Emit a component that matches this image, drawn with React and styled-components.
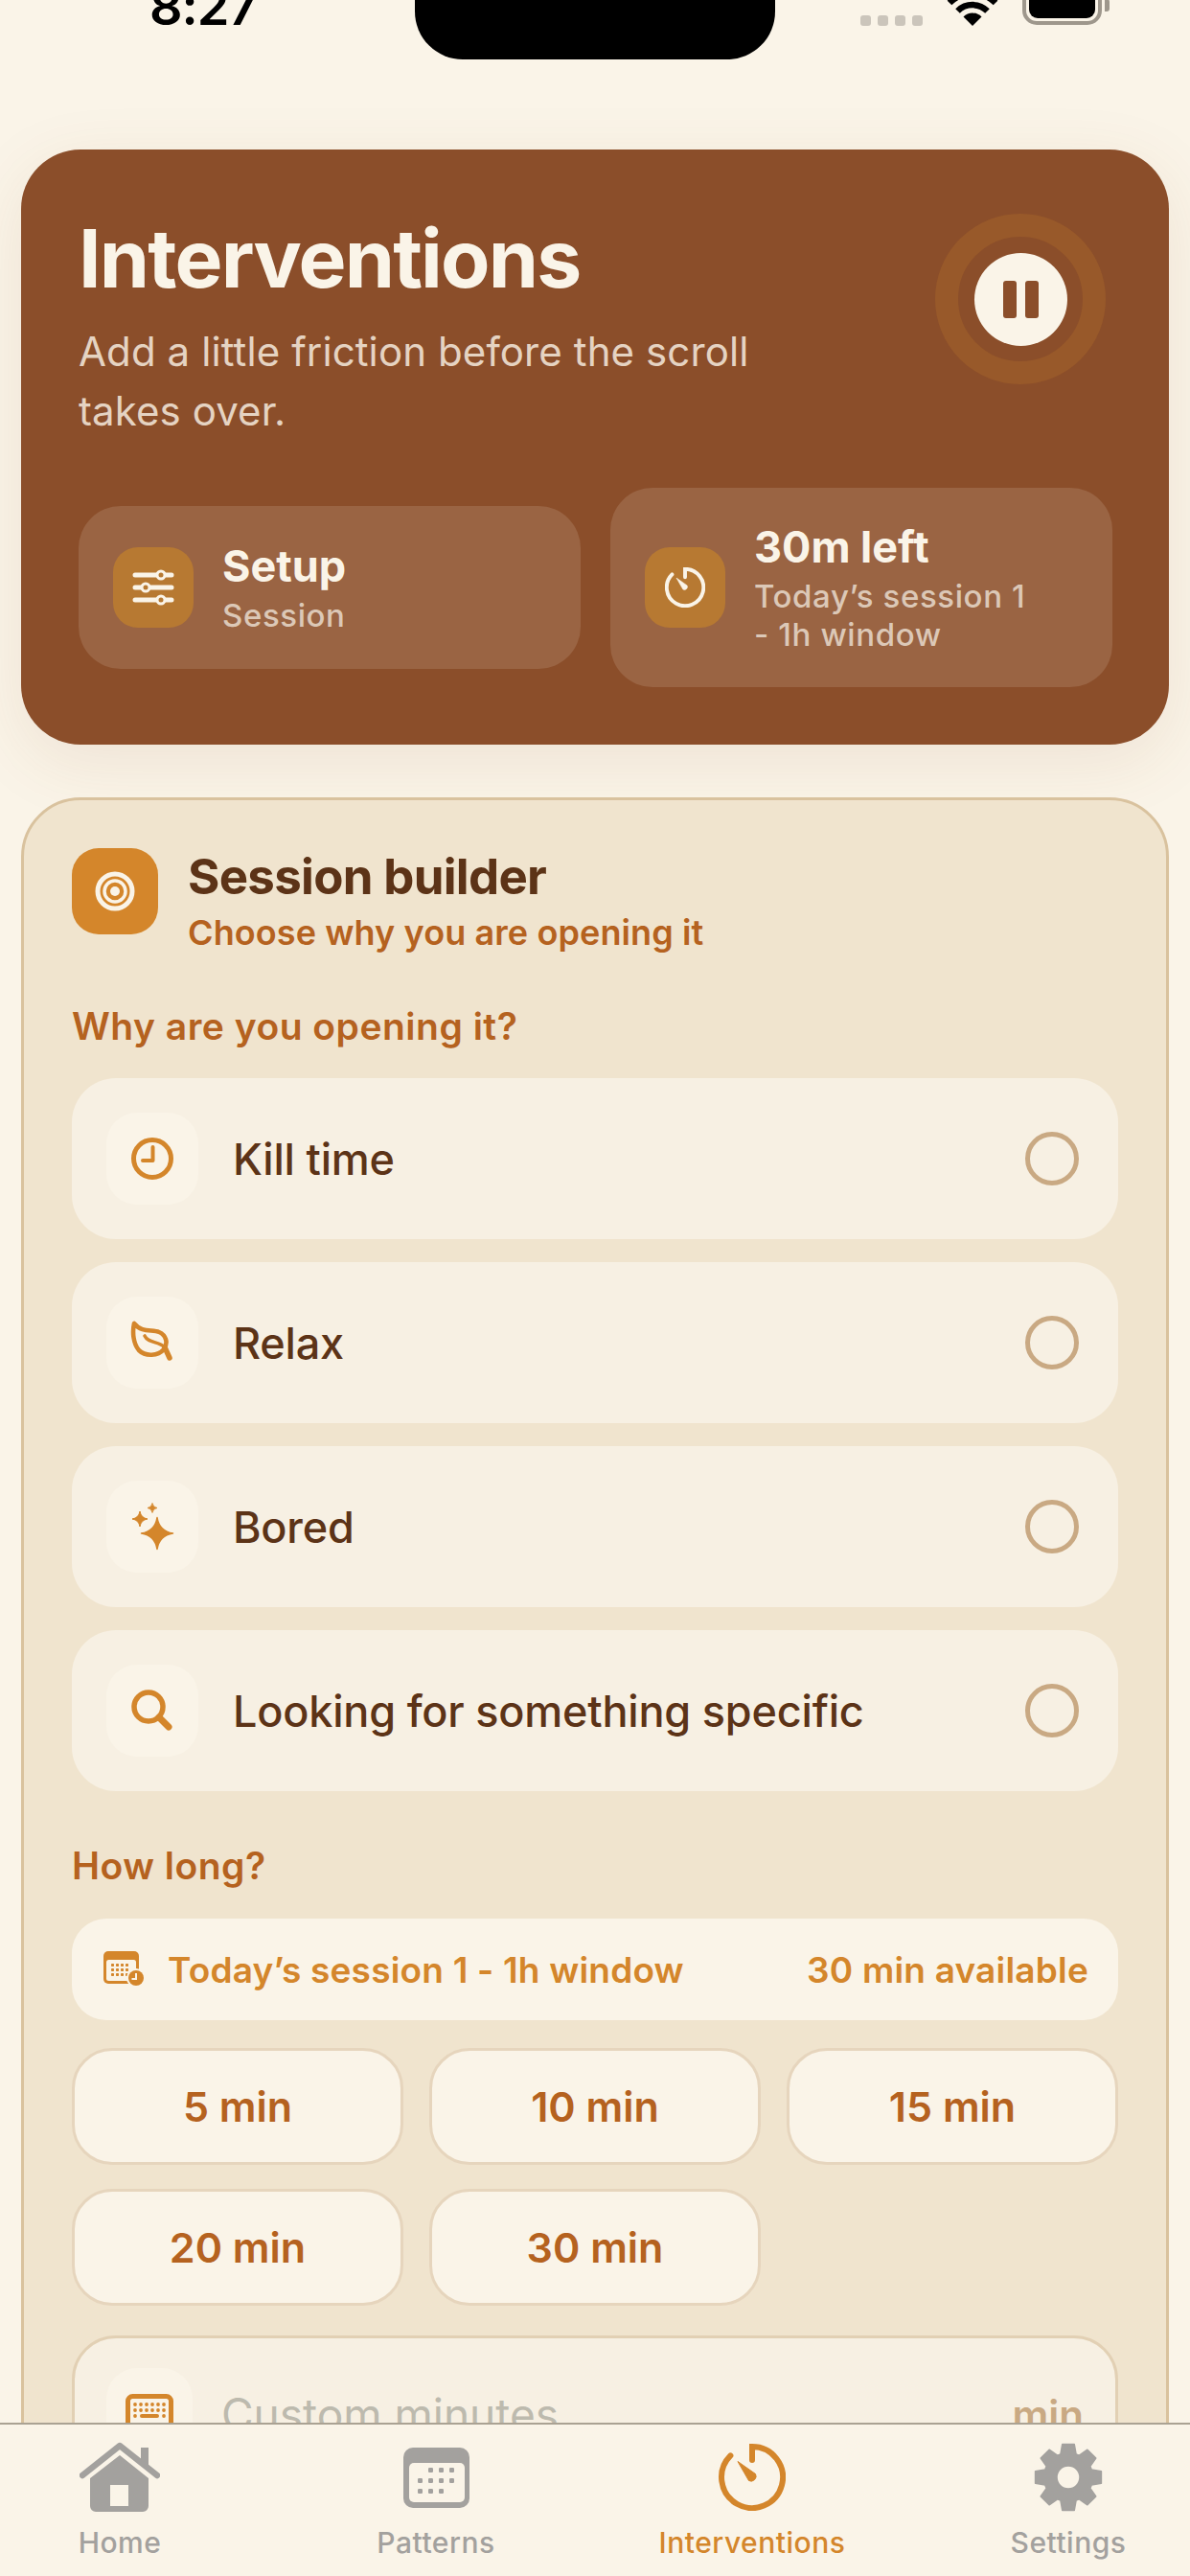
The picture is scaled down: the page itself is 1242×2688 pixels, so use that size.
import React from "react";
import styled, { createGlobalStyle } from "styled-components";

const ORANGE = "#D4862B";
const GREY = "#A3A19E";
const CREAM = "#FAF4E8";

const Global = createGlobalStyle`
  html, body { margin: 0; padding: 0; background: ${CREAM}; overflow: hidden; }
  * { box-sizing: border-box; }
  body { font-family: Inter, "Noto Sans", sans-serif; }
`;

const Screen = styled.div`
  position: relative;
  width: 1242px;
  height: 2688px;
  overflow: hidden;
  background: ${CREAM};
`;
const StatusBar = styled.div`
  display: flex;
  justify-content: space-between;
  align-items: flex-end;
  height: 27px;
  padding: 0 83px 0 156px;
`;
const Time = styled.div`
  font-size: 54px;
  line-height: 54px;
  font-weight: 600;
  color: #000;
  margin-bottom: -7px;
  letter-spacing: -1px;
`;
const Island = styled.div`
  position: absolute;
  top: 0;
  left: 433px;
  width: 376px;
  height: 62px;
  background: #000;
  border-radius: 0 0 50px 50px;
`;
const StatusRight = styled.div`
  display: flex;
  align-items: flex-end;
  gap: 22px;
`;
const Dots = styled.div`
  display: flex;
  gap: 7px;
`;
const Dot = styled.span`
  width: 11px;
  height: 11px;
  border-radius: 3px;
  background: #cbc5bb;
`;
const Content = styled.div`
  padding: 129px 22px 0;
`;
const Hero = styled.section`
  background: #8b4e2a;
  border-radius: 62px;
  padding: 60px 59px 60px 60px;
  box-shadow: 0 18px 70px rgba(139, 78, 42, 0.1);
`;
const HeroTop = styled.div`
  display: flex;
  justify-content: space-between;
  align-items: flex-start;
`;
const HeroText = styled.div`
  width: 760px;
  padding-top: 4px;
`;
const HeroTitle = styled.h1`
  margin: 0;
  font-size: 84px;
  line-height: 100px;
  font-weight: 700;
  letter-spacing: -1.8px;
  color: ${CREAM};
`;
const HeroSub = styled.p`
  margin: 16px 0 0;
  font-size: 42px;
  line-height: 62px;
  font-weight: 400;
  letter-spacing: 0.1px;
  color: #e5d3c2;
`;
const PauseRing = styled.div`
  width: 178px;
  height: 178px;
  margin: 7px 7px 0 0;
  border: 24px solid #98592a;
  border-radius: 50%;
  display: flex;
  align-items: center;
  justify-content: center;
  flex: none;
`;
const PauseBtn = styled.div`
  width: 97px;
  height: 97px;
  border-radius: 50%;
  background: ${CREAM};
  display: flex;
  align-items: center;
  justify-content: center;
  gap: 9px;
`;
const PauseBar = styled.span`
  width: 14px;
  height: 39px;
  border-radius: 3px;
  background: #8b4e2a;
`;
const Stats = styled.div`
  display: grid;
  grid-template-columns: 524px 524px;
  gap: 31px;
  align-items: center;
  margin-top: 49px;
`;
const Stat = styled.div`
  display: flex;
  align-items: center;
  gap: 30px;
  padding: 0 36px;
  height: ${(p) => p.$h}px;
  border-radius: 44px;
  background: #9a6443;
`;
const StatIcon = styled.div`
  width: 84px;
  height: 84px;
  border-radius: 26px;
  background: #b77932;
  display: flex;
  align-items: center;
  justify-content: center;
  flex: none;
`;
const StatText = styled.div`
  display: flex;
  flex-direction: column;
  max-width: 300px;
`;
const StatTitle = styled.div`
  font-size: 45px;
  line-height: 52px;
  font-weight: 700;
  color: ${CREAM};
`;
const StatSub = styled.div`
  margin-top: 5px;
  font-size: 33px;
  line-height: 40px;
  font-weight: 500;
  letter-spacing: 0.6px;
  color: #dcc8b7;
`;
const Builder = styled.section`
  margin-top: 55px;
  padding: 50px;
  background: #f0e4ce;
  border: 3px solid #d9c29e;
  border-radius: 62px;
  height: 1900px;
`;
const BuilderHead = styled.div`
  display: flex;
  align-items: flex-start;
  gap: 31px;
`;
const BuilderIcon = styled.div`
  width: 90px;
  height: 90px;
  border-radius: 28px;
  background: ${ORANGE};
  display: flex;
  align-items: center;
  justify-content: center;
  flex: none;
`;
const BuilderTitle = styled.h2`
  margin: 0;
  font-size: 51px;
  line-height: 60px;
  font-weight: 700;
  letter-spacing: -0.7px;
  color: #5c3317;
`;
const BuilderSub = styled.div`
  margin-top: 6px;
  font-size: 36px;
  line-height: 44px;
  font-weight: 600;
  letter-spacing: 0.1px;
  color: #b5621f;
`;
const Label = styled.div`
  margin-top: ${(p) => p.$mt}px;
  font-size: 39px;
  line-height: 46px;
  font-weight: 600;
  letter-spacing: 0.5px;
  color: #b5621f;
`;
const Options = styled.div`
  display: flex;
  flex-direction: column;
  gap: 24px;
  margin-top: 31px;
`;
const Option = styled.div`
  display: flex;
  align-items: center;
  height: 168px;
  padding: 0 41px 0 36px;
  border-radius: 46px;
  background: #f7f0e3;
`;
const Well = styled.div`
  width: 96px;
  height: 96px;
  border-radius: 32px;
  background: ${CREAM};
  display: flex;
  align-items: center;
  justify-content: center;
  flex: none;
`;
const OptionText = styled.div`
  flex: 1;
  margin-left: 36px;
  font-size: 45px;
  font-weight: 500;
  letter-spacing: -0.2px;
  color: #5c3317;
`;
const Radio = styled.span`
  width: 56px;
  height: 56px;
  border-radius: 50%;
  border: 5px solid #c9a983;
  flex: none;
`;
const InfoBar = styled.div`
  display: flex;
  align-items: center;
  height: 106px;
  margin-top: 32px;
  padding: 0 31px 0 33px;
  border-radius: 36px;
  background: ${CREAM};
  color: ${ORANGE};
  font-size: 37px;
  font-weight: 600;
  letter-spacing: 0.2px;
`;
const InfoLeft = styled.span`
  flex: 1;
  margin-left: 23px;
`;
const Durations = styled.div`
  display: grid;
  grid-template-columns: repeat(3, 1fr);
  gap: 25px 27px;
  margin-top: 29px;
`;
const Duration = styled.div`
  height: 122px;
  display: flex;
  align-items: center;
  justify-content: center;
  border: 3px solid #e6d5bd;
  border-radius: 42px;
  background: ${CREAM};
  font-size: 43px;
  font-weight: 600;
  color: #b5621f;
`;
const Custom = styled.div`
  display: flex;
  align-items: center;
  height: 164px;
  margin-top: 31px;
  padding: 0 33px 0 33px;
  border: 3px solid #e2d0b4;
  border-radius: 46px;
  background: #f7f0e3;
`;
const CustomWell = styled(Well)`
  width: 90px;
`;
const CustomText = styled.div`
  flex: 1;
  margin-left: 30px;
  font-size: 46px;
  font-weight: 400;
  color: #bdbaae;
`;
const CustomUnit = styled.div`
  font-size: 42px;
  font-weight: 600;
  color: #c9a983;
`;
const TabBar = styled.nav`
  position: absolute;
  left: 0;
  right: 0;
  bottom: 0;
  height: 160px;
  display: flex;
  justify-content: space-between;
  padding: 18px 2px 0 0;
  background: ${CREAM};
  border-top: 2px solid #aaa293;
`;
const Tab = styled.div`
  width: 250px;
  display: flex;
  flex-direction: column;
  align-items: center;
  color: ${(p) => (p.$active ? ORANGE : GREY)};
`;
const TabIcon = styled.div`
  height: 74px;
  display: flex;
  align-items: center;
  justify-content: center;
`;
const TabLabel = styled.div`
  margin-top: 12px;
  font-size: 30px;
  line-height: 38px;
  font-weight: 500;
  letter-spacing: 0.5px;
`;

const Wifi = () => (
  <svg width="60" height="27" viewBox="0 0 60 27">
    <path d="M30 27 L20.5 17.5 A13.5 13.5 0 0 1 39.5 17.5 Z" fill="#000" />
    <path d="M14.5 11.5 A22 22 0 0 1 45.5 11.5" fill="none" stroke="#000" strokeWidth="6.5" />
    <path d="M6 3 A34 34 0 0 1 54 3" fill="none" stroke="#000" strokeWidth="6.5" />
  </svg>
);
const Battery = () => (
  <svg width="92" height="28" viewBox="0 0 92 28">
    <rect x="2" y="-22" width="79" height="47" rx="13" fill="none" stroke="#9e978c" strokeWidth="4" />
    <rect x="7" y="-22" width="69" height="42" rx="9" fill="#000" />
    <path d="M86 0 H88 A3 3 0 0 1 91 3 V10 A3 3 0 0 1 88 13 H86 Z" fill="#9e978c" />
  </svg>
);
const Sliders = () => (
  <svg width="44" height="40" viewBox="0 0 44 40">
    <g stroke="#FAF4E8" strokeWidth="5" strokeLinecap="round">
      <path d="M3 7 H41 M3 20 H41 M3 33 H41" />
    </g>
    <g fill="#B77932" stroke="#FAF4E8" strokeWidth="3">
      <circle cx="30" cy="7" r="4" />
      <circle cx="14" cy="20" r="4" />
      <circle cx="30" cy="33" r="4" />
    </g>
  </svg>
);
const Timer = ({ size, color, sw }) => (
  <svg width={size} height={size} viewBox="0 0 70 70">
    <path
      d="M35 17 V3 A32 32 0 1 1 12.4 12.4"
      fill="none"
      stroke={color}
      strokeWidth={sw}
      strokeLinecap="round"
    />
    <path d="M20 18.5 L38.5 31.5 A5.2 5.2 0 0 1 31.5 38.5 Z" fill={color} stroke={color} strokeLinejoin="round" />
  </svg>
);
const Target = () => (
  <svg width="42" height="42" viewBox="0 0 42 42">
    <circle cx="21" cy="21" r="18" fill="none" stroke="#FAF4E8" strokeWidth="5" />
    <circle cx="21" cy="21" r="11" fill="none" stroke="#FAF4E8" strokeWidth="3.5" />
    <circle cx="21" cy="21" r="5" fill="#FAF4E8" />
  </svg>
);
const Clock = () => (
  <svg width="46" height="46" viewBox="0 0 46 46">
    <circle cx="23" cy="23" r="19.5" fill="none" stroke={ORANGE} strokeWidth="5" />
    <path d="M23.5 11 V25 H13" fill="none" stroke={ORANGE} strokeWidth="4" strokeLinecap="round" strokeLinejoin="round" />
  </svg>
);
const Leaf = () => (
  <svg width="48" height="46" viewBox="0 0 48 46">
    <path
      d="M5 3 C3 12 4 24 10 31 C17 38 30 37 36 30 C41 23 38 15 31 12 C24 9 13 13 5 3 Z"
      fill="none"
      stroke={ORANGE}
      strokeWidth="4.6"
      strokeLinejoin="round"
    />
    <path
      d="M16 16 C20 24 30 21 37 28 L42 39"
      fill="none"
      stroke={ORANGE}
      strokeWidth="3.6"
      strokeLinecap="round"
    />
    <path d="M37 28 L42 39" stroke={ORANGE} strokeWidth="5.5" strokeLinecap="round" />
  </svg>
);
const star = (cx, cy, r) => {
  const k = r * 0.14;
  return `M${cx} ${cy - r} Q${cx + k} ${cy - k} ${cx + r} ${cy} Q${cx + k} ${cy + k} ${cx} ${cy + r} Q${cx - k} ${cy + k} ${cx - r} ${cy} Q${cx - k} ${cy - k} ${cx} ${cy - r} Z`;
};
const Sparkles = () => (
  <svg width="46" height="50" viewBox="0 0 46 50">
    <path d={star(28, 32, 16.5)} fill={ORANGE} stroke={ORANGE} strokeWidth="1.5" strokeLinejoin="round" />
    <path d={star(10, 17, 8)} fill={ORANGE} stroke={ORANGE} strokeWidth="1" strokeLinejoin="round" />
    <path d={star(23, 5.5, 5)} fill={ORANGE} stroke={ORANGE} strokeWidth="0.8" strokeLinejoin="round" />
  </svg>
);
const Search = () => (
  <svg width="44" height="44" viewBox="0 0 44 44">
    <circle cx="18" cy="18" r="15" fill="none" stroke={ORANGE} strokeWidth="5.5" />
    <path d="M29 29 L39 39" stroke={ORANGE} strokeWidth="7" strokeLinecap="round" />
  </svg>
);
const CalBadge = () => (
  <svg width="44" height="38" viewBox="0 0 44 38">
    <rect x="0" y="0" width="37" height="34" rx="5" fill={ORANGE} />
    <rect x="3" y="9" width="31" height="22" rx="2.5" fill={CREAM} />
    <g fill={ORANGE}>
      {[13, 18, 23].map((y) =>
        [8, 13, 18, 23].map((x) => <rect key={`${x}-${y}`} x={x} y={y} width="3" height="3" rx="0.8" />)
      )}
    </g>
    <circle cx="34" cy="28" r="10" fill={CREAM} />
    <circle cx="34" cy="28" r="8" fill={ORANGE} />
    <path d="M34 23 V29 H29.5" fill="none" stroke={CREAM} strokeWidth="2" />
  </svg>
);
const Keyboard = () => (
  <svg width="50" height="42" viewBox="0 0 50 42">
    <rect x="2.5" y="2.5" width="45" height="37" rx="5" fill={CREAM} stroke={ORANGE} strokeWidth="5" />
    <g fill={ORANGE}>
      {[9, 15].map((y) =>
        [8, 14, 20, 26, 32, 38].map((x) => <circle key={`${x}-${y}`} cx={x + 2} cy={y + 2} r="1.9" />)
      )}
      <circle cx="10" cy="23" r="1.9" />
      <rect x="15" y="21" width="20" height="4" rx="2" />
      <circle cx="40" cy="23" r="1.9" />
    </g>
  </svg>
);
const Home = () => (
  <svg width="84" height="74" viewBox="0 0 84 74" fill={GREY}>
    <path d="M64 6 H72 V26 L64 20 Z" />
    <path d="M3 35 L42 4 L81 35" fill="none" stroke={GREY} strokeWidth="6.5" strokeLinecap="round" strokeLinejoin="round" />
    <path
      fillRule="evenodd"
      d="M42 14 L72 38 V67 A6 6 0 0 1 66 73 H17 A6 6 0 0 1 11 67 V38 Z M32 45 V67 H51 V45 Z"
    />
  </svg>
);
const Patterns = () => (
  <svg width="69" height="63" viewBox="0 0 69 63">
    <rect width="69" height="63" rx="10" fill={GREY} />
    <rect x="6" y="16" width="58" height="41" rx="5" fill={CREAM} />
    <g fill={GREY}>
      {[
        [21, 26],
        [32, 26],
        [43, 26],
        [10, 37],
        [21, 37],
        [32, 37],
        [43, 37],
        [10, 48],
        [21, 48],
        [32, 48],
      ].map(([x, y]) => (
        <rect key={`${x}-${y}`} x={x + 5} y={y - 5} width="5" height="5" rx="1.2" />
      ))}
    </g>
  </svg>
);
const gearPath = () => {
  const n = 8;
  const c = 36;
  const outer = 35;
  const root = 25.5;
  const pts = [];
  for (let i = 0; i < n; i++) {
    const a = (i * 2 * Math.PI) / n - Math.PI / 2;
    const step = (2 * Math.PI) / n;
    [
      [root, -0.5 * step + 0.07],
      [outer, -0.18],
      [outer, 0.18],
      [root, 0.5 * step - 0.07],
    ].forEach(([r, d]) => {
      pts.push(`${(c + r * Math.cos(a + d)).toFixed(2)} ${(c + r * Math.sin(a + d)).toFixed(2)}`);
    });
  }
  return `M${pts.join(" L")} Z`;
};
const Gear = () => (
  <svg width="72" height="72" viewBox="0 0 72 72">
    <path
      fillRule="evenodd"
      d={`${gearPath()} M36 24 A12 12 0 1 0 36 48 A12 12 0 1 0 36 24 Z`}
      fill={GREY}
      stroke={GREY}
      strokeWidth="1.5"
      strokeLinejoin="round"
    />
  </svg>
);

const reasons = [
  ["Kill time", <Clock key="c" />],
  ["Relax", <Leaf key="l" />],
  ["Bored", <Sparkles key="s" />],
  ["Looking for something specific", <Search key="f" />],
];
const mins = ["5 min", "10 min", "15 min", "20 min", "30 min"];

export default function App() {
  return (
    <Screen>
      <Global />
      <StatusBar>
        <Time>8:27</Time>
        <StatusRight>
          <Dots>
            <Dot />
            <Dot />
            <Dot />
            <Dot />
          </Dots>
          <Wifi />
          <Battery />
        </StatusRight>
      </StatusBar>
      <Island />
      <Content>
        <Hero>
          <HeroTop>
            <HeroText>
              <HeroTitle>Interventions</HeroTitle>
              <HeroSub>Add a little friction before the scroll takes over.</HeroSub>
            </HeroText>
            <PauseRing>
              <PauseBtn>
                <PauseBar />
                <PauseBar />
              </PauseBtn>
            </PauseRing>
          </HeroTop>
          <Stats>
            <Stat $h={170}>
              <StatIcon>
                <Sliders />
              </StatIcon>
              <StatText>
                <StatTitle>Setup</StatTitle>
                <StatSub>Session</StatSub>
              </StatText>
            </Stat>
            <Stat $h={208}>
              <StatIcon>
                <Timer size={42} color="#FAF4E8" sw={6.5} />
              </StatIcon>
              <StatText>
                <StatTitle>30m left</StatTitle>
                <StatSub>Today’s session 1 - 1h window</StatSub>
              </StatText>
            </Stat>
          </Stats>
        </Hero>
        <Builder>
          <BuilderHead>
            <BuilderIcon>
              <Target />
            </BuilderIcon>
            <div>
              <BuilderTitle>Session builder</BuilderTitle>
              <BuilderSub>Choose why you are opening it</BuilderSub>
            </div>
          </BuilderHead>
          <Label $mt={53}>Why are you opening it?</Label>
          <Options>
            {reasons.map(([t, icon]) => (
              <Option key={t}>
                <Well>{icon}</Well>
                <OptionText>{t}</OptionText>
                <Radio />
              </Option>
            ))}
          </Options>
          <Label $mt={55}>How long?</Label>
          <InfoBar>
            <CalBadge />
            <InfoLeft>Today’s session 1 - 1h window</InfoLeft>
            <span>30 min available</span>
          </InfoBar>
          <Durations>
            {mins.map((m) => (
              <Duration key={m}>{m}</Duration>
            ))}
          </Durations>
          <Custom>
            <CustomWell>
              <Keyboard />
            </CustomWell>
            <CustomText>Custom minutes</CustomText>
            <CustomUnit>min</CustomUnit>
          </Custom>
        </Builder>
      </Content>
      <TabBar>
        <Tab>
          <TabIcon>
            <Home />
          </TabIcon>
          <TabLabel>Home</TabLabel>
        </Tab>
        <Tab>
          <TabIcon>
            <Patterns />
          </TabIcon>
          <TabLabel>Patterns</TabLabel>
        </Tab>
        <Tab $active>
          <TabIcon>
            <Timer size={70} color={ORANGE} sw={6} />
          </TabIcon>
          <TabLabel>Interventions</TabLabel>
        </Tab>
        <Tab>
          <TabIcon>
            <Gear />
          </TabIcon>
          <TabLabel>Settings</TabLabel>
        </Tab>
      </TabBar>
    </Screen>
  );
}
